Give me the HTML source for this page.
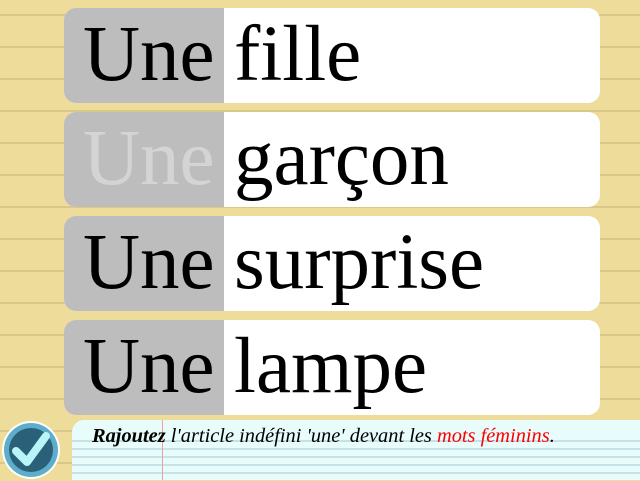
<!DOCTYPE html>
<html><head><style>
body{margin:0;width:640px;height:480px;overflow:hidden;position:relative;
background:#eedc9a repeating-linear-gradient(to bottom,transparent 0 14px,#d9c88a 14px 16px,transparent 16px 32px);font-family:"Liberation Serif",serif}
.card{position:absolute;left:64px;width:536px;height:95px;background:#fff;border-radius:12px;overflow:hidden}
.art{position:absolute;left:0;top:0;width:160px;height:95px;background:#bdbdbd}
.art span{position:absolute;left:19px;top:-1px;font-size:79px;line-height:95px;color:#000}
.w{position:absolute;left:170px;top:-1px;font-size:79px;line-height:95px;color:#000}
.panel{position:absolute;left:72px;top:420px;width:568px;height:60px;border-top-left-radius:12px;
background:#e8fcfc repeating-linear-gradient(to bottom,transparent 0 20px,#c6e2e6 20px 22px,transparent 22px 28px,#c6e2e6 28px 30px,transparent 30px 36px,#c6e2e6 36px 38px,transparent 38px 44px,#c6e2e6 44px 46px,transparent 46px 52px,#c6e2e6 52px 54px,transparent 54px 60px)}
.red{position:absolute;left:90px;top:0;width:1px;height:60px;background:#f0a0a0}
.txt{position:absolute;left:20px;top:5px;font-size:20.4px;font-style:italic;color:#000;white-space:nowrap}
</style></head><body>
<div class="card" style="top:8px"><div class="art"><span>Une</span></div><div class="w">fille</div></div>
<div class="card" style="top:112px"><div class="art"><span style="color:#d4d4d4">Une</span></div><div class="w">garçon</div></div>
<div class="card" style="top:216px"><div class="art"><span>Une</span></div><div class="w">surprise</div></div>
<div class="card" style="top:320px"><div class="art"><span>Une</span></div><div class="w">lampe</div></div>
<div class="panel"><div class="red"></div><div class="txt"><b>Rajoutez</b> l'article indéfini 'une' devant les <span style="color:#f00">mots féminins</span>.</div></div>
<svg style="position:absolute;left:0;top:419px" width="64" height="62">
<circle cx="31" cy="31" r="29" fill="#fff"/>
<circle cx="31" cy="31" r="27" fill="#5eaecb"/>
<circle cx="31" cy="31" r="22" fill="#2b6079"/>
<path d="M16 32 L27 43 L46 17" stroke="#b8f4f8" stroke-width="8" fill="none" stroke-linecap="round" stroke-linejoin="round"/>
</svg>
</body></html>
